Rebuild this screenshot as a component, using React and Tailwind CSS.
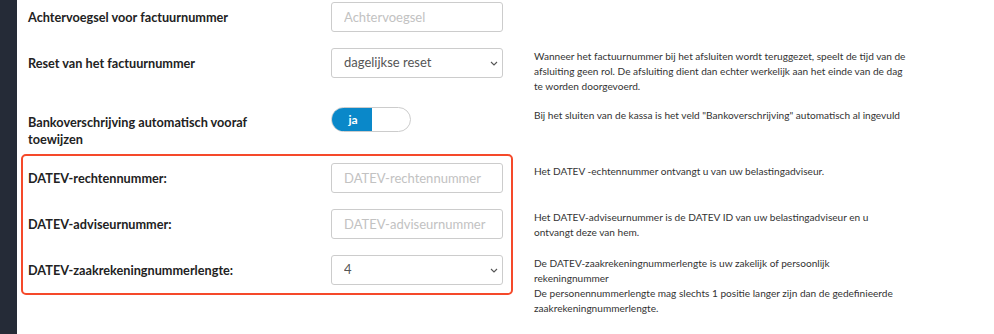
import React from "react";

const Chevron = () => (
  <svg
    width="8"
    height="5"
    viewBox="0 0 8 5"
    className="pointer-events-none absolute right-[5px] top-[13px]"
  >
    <path d="M1 1l3 3 3-3" fill="none" stroke="#555" strokeWidth="1.1" />
  </svg>
);

const TextInput = ({ placeholder }) => (
  <input
    type="text"
    placeholder={placeholder}
    className="h-[30px] w-[172px] rounded-[3px] border border-[#cccccc] bg-white px-[12px] text-[13px] text-[#555] placeholder:text-[#c2c2c2] outline-none"
  />
);

const Select = ({ value, options }) => (
  <div className="relative h-[30px] w-[172px]">
    <select
      defaultValue={value}
      className="h-[30px] w-full appearance-none rounded-[3px] border border-[#cccccc] bg-white pl-[12px] text-[13px] text-[#555] outline-none"
    >
      {options.map((o) => (
        <option key={o}>{o}</option>
      ))}
    </select>
    <Chevron />
  </div>
);

const Toggle = () => (
  <div className="flex h-[25px] w-[80px] overflow-hidden rounded-full border border-[#cccccc] bg-white">
    <div className="flex w-[40px] items-center justify-center bg-[#0a88c9] pl-[2px] text-[12px] font-bold text-white">
      ja
    </div>
  </div>
);

const Row = ({ label, control, desc, className = "" }) => (
  <div className={"flex items-start " + className}>
    <div className="w-[303px] pt-[7px] pr-[8px] text-[12.7px] font-bold leading-[17px] text-[#222]">
      {label}
    </div>
    <div className="w-[172px] shrink-0">{control}</div>
    {desc && (
      <div className="ml-[31px] w-[374px] pt-[1px] text-[10.1px] leading-[15px] text-[#333]">
        {desc}
      </div>
    )}
  </div>
);

export default function App() {
  return (
    <div
      className="flex min-h-[334px] w-full bg-white"
      style={{ fontFamily: "Lato, 'Open Sans', sans-serif" }}
    >
      <div className="w-[17px] shrink-0 bg-[#252b37]" />
      <div className="flex-1 pl-[11px] pt-[2px]">
        <Row
          label="Achtervoegsel voor factuurnummer"
          control={<TextInput placeholder="Achtervoegsel" />}
        />
        <Row
          className="mt-[16px]"
          label="Reset van het factuurnummer"
          control={
            <Select
              value="dagelijkse reset"
              options={["dagelijkse reset", "maandelijkse reset", "jaarlijkse reset", "geen reset"]}
            />
          }
          desc="Wanneer het factuurnummer bij het afsluiten wordt teruggezet, speelt de tijd van de afsluiting geen rol. De afsluiting dient dan echter werkelijk aan het einde van de dag te worden doorgevoerd."
        />
        <Row
          className="mt-[13px]"
          label={
            <>
              Bankoverschrijving automatisch vooraf
              <br />
              toewijzen
            </>
          }
          control={<Toggle />}
          desc={'Bij het sluiten van de kassa is het veld "Bankoverschrijving" automatisch al ingevuld'}
        />

        <div className="relative mt-[15px]">
          <div className="pointer-events-none absolute left-[-7px] top-[-9px] h-[141px] w-[492px] rounded-[5px] border-2 border-[#f5492a]" />
          <Row
            label="DATEV-rechtennummer:"
            control={<TextInput placeholder="DATEV-rechtennummer" />}
            desc="Het DATEV -echtennummer ontvangt u van uw belastingadviseur."
          />
          <Row
            className="mt-[16px]"
            label="DATEV-adviseurnummer:"
            control={<TextInput placeholder="DATEV-adviseurnummer" />}
            desc="Het DATEV-adviseurnummer is de DATEV ID van uw belastingadviseur en u ontvangt deze van hem."
          />
          <Row
            className="mt-[15px]"
            label="DATEV-zaakrekeningnummerlengte:"
            control={<Select value="4" options={["4", "5", "6", "7", "8"]} />}
            desc={
              <>
                De DATEV-zaakrekeningnummerlengte is uw zakelijk of persoonlijk
                <br />
                rekeningnummer
                <br />
                De personennummerlengte mag slechts 1 positie langer zijn dan de gedefinieerde
                zaakrekeningnummerlengte.
              </>
            }
          />
        </div>
      </div>
    </div>
  );
}
